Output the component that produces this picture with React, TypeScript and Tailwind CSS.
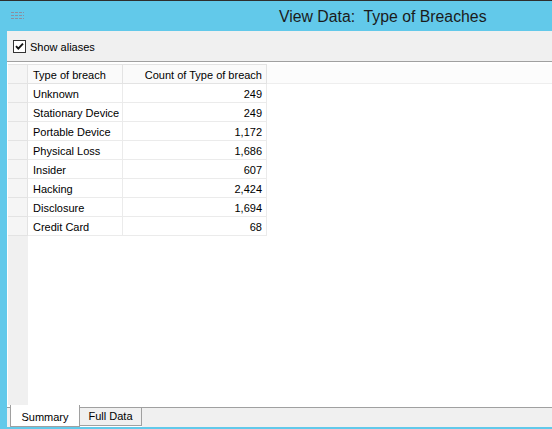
import React from "react";

const rows: [string, string][] = [
  ["Unknown", "249"],
  ["Stationary Device", "249"],
  ["Portable Device", "1,172"],
  ["Physical Loss", "1,686"],
  ["Insider", "607"],
  ["Hacking", "2,424"],
  ["Disclosure", "1,694"],
  ["Credit Card", "68"],
];

export default function App() {
  return (
    <div
      className="w-[552px] h-[429px] bg-[#62c9ea] border-t border-[#2e2e2e] flex flex-col overflow-hidden text-black"
      style={{ fontFamily: '"Liberation Sans", Arial, sans-serif' }}
    >
      {/* title bar */}
      <div className="h-[30px] flex items-center relative shrink-0">
        <svg className="ml-[11px] mt-[-1px]" width="13" height="8" viewBox="0 0 13 8">
          <g stroke="#8a8fa0" strokeWidth="1" strokeDasharray="3 1">
            <line x1="0" y1="0.5" x2="13" y2="0.5" />
            <line x1="0" y1="3.5" x2="13" y2="3.5" />
            <line x1="0" y1="6.5" x2="13" y2="6.5" />
          </g>
        </svg>
        <div className="ml-[255px] text-[15.8px] text-[#1b1b1b] whitespace-pre leading-none mt-[1px]">
          View Data:  Type of Breaches
        </div>
      </div>

      {/* main */}
      <div className="flex-1 ml-[7px] bg-white flex flex-col min-h-0">
        {/* toolbar */}
        <div className="h-[31px] shrink-0 bg-[#f0f0f0] border-b border-[#a0a0a0] flex items-center pl-[6px] text-[11px]">
          <svg width="13" height="13" viewBox="0 0 13 13" className="shrink-0">
            <rect x="0.5" y="0.5" width="12" height="12" fill="#fff" stroke="#333" />
            <path d="M3 6.2 L5.3 8.6 L10 3.6" fill="none" stroke="#111" strokeWidth="1.9" />
          </svg>
          <span className="ml-[4px] mt-[2px]">Show aliases</span>
        </div>

        {/* grid */}
        <div className="flex-1 min-h-0 pt-[2px] pl-[1px] flex flex-col text-[11px]">
          {/* header row */}
          <div className="flex h-[20px] shrink-0">
            <div className="w-[20px] bg-[#f5f5f5] border-t border-b border-r border-[#e3e3e3]" />
            <div className="w-[95px] bg-[#fafafa] border-t border-b border-r border-[#e3e3e3] pl-[5px] pt-[2px] flex items-center">
              Type of breach
            </div>
            <div className="w-[144px] bg-[#fafafa] border-t border-b border-r border-[#e3e3e3] pr-[4px] pt-[2px] flex items-center justify-end">
              Count of Type of breach
            </div>
            <div className="flex-1 bg-[#fcfcfc] border-b border-[#eeeeee]" />
          </div>
          {rows.map(([name, count]) => (
            <div key={name} className="flex h-[19px] shrink-0">
              <div className="w-[20px] bg-[#f5f5f5] border-b border-r border-[#e3e3e3]" />
              <div className="w-[95px] bg-white border-b border-r border-[#ebebeb] pl-[5px] pt-[2px] flex items-center">
                {name}
              </div>
              <div className="w-[144px] bg-white border-b border-r border-[#ebebeb] pr-[4px] pt-[2px] flex items-center justify-end">
                {count}
              </div>
            </div>
          ))}
          <div className="flex-1 flex">
            <div className="w-[20px] bg-[#f0f0f0]" />
          </div>
        </div>

        {/* tabs */}
        <div className="h-[22px] shrink-0 flex bg-white text-[11px]">
          <div className="w-[3px] mt-[2px] bg-[#f0f0f0] border-t border-[#a0a0a0]" />
          <div className="w-[70px] h-full bg-white border-l border-r border-b border-[#a0a0a0] flex items-center justify-center pt-[3px]">
            Summary
          </div>
          <div className="w-[62px] mt-[2px] h-[19px] bg-[#f0f0f0] border-t border-r border-b border-[#a0a0a0] flex items-center justify-center">
            Full Data
          </div>
          <div className="flex-1 mt-[2px] bg-[#f0f0f0] border-t border-[#a0a0a0]" />
        </div>
      </div>
      <div className="h-[2px] shrink-0" />
    </div>
  );
}
